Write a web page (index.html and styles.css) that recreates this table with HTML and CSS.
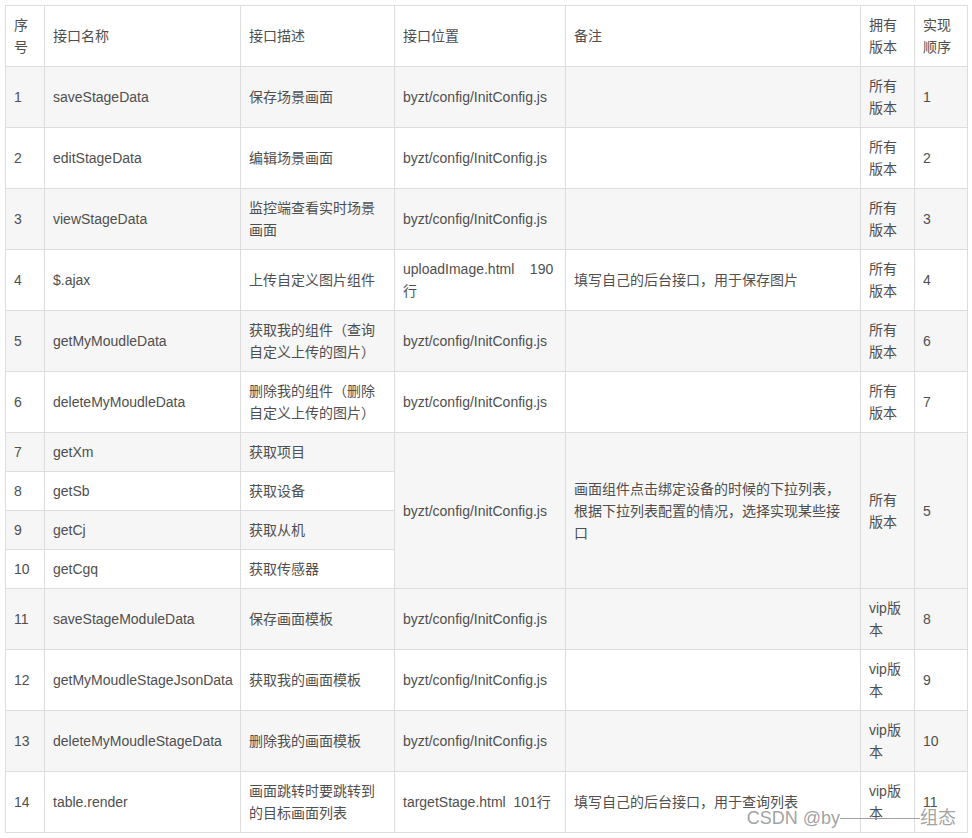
FILE: index.html
```html
<!DOCTYPE html>
<html lang="zh-CN">
<head>
<meta charset="utf-8">
<title>接口列表</title>
<link rel="stylesheet" href="styles.css">
</head>
<body>
<div class="wrap">
<table class="api-table">
  <colgroup>
    <col class="c-no"><col class="c-name"><col class="c-desc"><col class="c-loc"><col class="c-note"><col class="c-ver"><col class="c-ord">
  </colgroup>
  <thead>
    <tr><th>序号</th><th>接口名称</th><th>接口描述</th><th>接口位置</th><th>备注</th><th>拥有版本</th><th>实现顺序</th></tr>
  </thead>
  <tbody>
    <tr class="odd"><td>1</td><td>saveStageData</td><td>保存场景画面</td><td>byzt/config/InitConfig.js</td><td></td><td>所有版本</td><td>1</td></tr>
    <tr><td>2</td><td>editStageData</td><td>编辑场景画面</td><td>byzt/config/InitConfig.js</td><td></td><td>所有版本</td><td>2</td></tr>
    <tr class="odd"><td>3</td><td>viewStageData</td><td>监控端查看实时场景画面</td><td>byzt/config/InitConfig.js</td><td></td><td>所有版本</td><td>3</td></tr>
    <tr><td>4</td><td>$.ajax</td><td>上传自定义图片组件</td><td>uploadImage.html&nbsp;&nbsp;&nbsp;&nbsp;190行</td><td>填写自己的后台接口，用于保存图片</td><td>所有版本</td><td>4</td></tr>
    <tr class="odd"><td>5</td><td>getMyMoudleData</td><td>获取我的组件（查询自定义上传的图片）</td><td>byzt/config/InitConfig.js</td><td></td><td>所有版本</td><td>6</td></tr>
    <tr><td>6</td><td>deleteMyMoudleData</td><td>删除我的组件（删除自定义上传的图片）</td><td>byzt/config/InitConfig.js</td><td></td><td>所有版本</td><td>7</td></tr>
    <tr class="odd"><td>7</td><td>getXm</td><td>获取项目</td><td rowspan="4">byzt/config/InitConfig.js</td><td rowspan="4">画面组件点击绑定设备的时候的下拉列表，根据下拉列表配置的情况，选择实现某些接口</td><td rowspan="4">所有版本</td><td rowspan="4">5</td></tr>
    <tr><td>8</td><td>getSb</td><td>获取设备</td></tr>
    <tr class="odd"><td>9</td><td>getCj</td><td>获取从机</td></tr>
    <tr><td>10</td><td>getCgq</td><td>获取传感器</td></tr>
    <tr class="odd"><td>11</td><td>saveStageModuleData</td><td>保存画面模板</td><td>byzt/config/InitConfig.js</td><td></td><td>vip版本</td><td>8</td></tr>
    <tr><td>12</td><td>getMyMoudleStageJsonData</td><td>获取我的画面模板</td><td>byzt/config/InitConfig.js</td><td></td><td>vip版本</td><td>9</td></tr>
    <tr class="odd"><td>13</td><td>deleteMyMoudleStageData</td><td>删除我的画面模板</td><td>byzt/config/InitConfig.js</td><td></td><td>vip版本</td><td>10</td></tr>
    <tr><td>14</td><td>table.render</td><td>画面跳转时要跳转到的目标画面列表</td><td>targetStage.html&nbsp;&nbsp;101行</td><td>填写自己的后台接口，用于查询列表</td><td>vip版本</td><td>11</td></tr>
  </tbody>
</table>
<div class="watermark">CSDN @by<span class="wm-line"></span>组态</div>
</div>
</body>
</html>
```
FILE: styles.css
```css
html, body {
  margin: 0;
  padding: 0;
  background: #ffffff;
}
body {
  font-family: "Liberation Sans", Arial, "Noto Sans CJK SC", sans-serif;
  font-size: 14px;
  color: #4f4f4f;
}
.wrap {
  position: relative;
  padding: 5px 6px 0 5px;
  height: 833px;
  box-sizing: border-box;
  overflow: hidden;
}
.api-table {
  border-collapse: collapse;
  table-layout: fixed;
  width: 962px;
}
.c-no { width: 39px; }
.c-name { width: 196px; }
.c-desc { width: 154px; }
.c-loc { width: 171px; }
.c-note { width: 295px; }
.c-ver { width: 54px; }
.c-ord { width: 53px; }
.api-table th,
.api-table td {
  border: 1px solid #dddddd;
  padding: 8px;
  line-height: 22px;
  text-align: left;
  vertical-align: middle;
  font-weight: normal;
  white-space: normal;
}
.api-table thead th {
  background: #ffffff;
  height: 44px;
}
.api-table tbody tr {
  background: #ffffff;
}
.api-table tbody tr.odd {
  background: #f6f6f6;
}
.watermark {
  position: absolute;
  right: 16px;
  bottom: 4px;
  font-size: 18px;
  line-height: 22px;
  color: rgba(150, 150, 150, 0.9);
  white-space: nowrap;
  display: flex;
  align-items: center;
}
.wm-line {
  display: inline-block;
  width: 80px;
  height: 1px;
  background: rgba(150, 150, 150, 0.9);
}
```
